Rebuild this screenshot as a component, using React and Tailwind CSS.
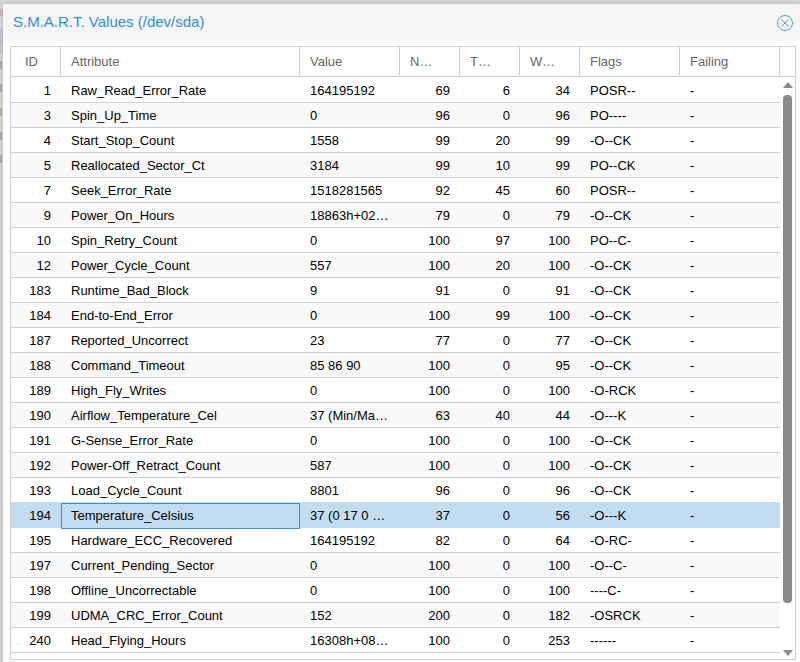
const rows = [
  ['1', 'Raw_Read_Error_Rate', '164195192', '69', '6', '34', 'POSR--'],
  ['3', 'Spin_Up_Time', '0', '96', '0', '96', 'PO----'],
  ['4', 'Start_Stop_Count', '1558', '99', '20', '99', '-O--CK'],
  ['5', 'Reallocated_Sector_Ct', '3184', '99', '10', '99', 'PO--CK'],
  ['7', 'Seek_Error_Rate', '1518281565', '92', '45', '60', 'POSR--'],
  ['9', 'Power_On_Hours', '18863h+02m+32.579s', '79', '0', '79', '-O--CK'],
  ['10', 'Spin_Retry_Count', '0', '100', '97', '100', 'PO--C-'],
  ['12', 'Power_Cycle_Count', '557', '100', '20', '100', '-O--CK'],
  ['183', 'Runtime_Bad_Block', '9', '91', '0', '91', '-O--CK'],
  ['184', 'End-to-End_Error', '0', '100', '99', '100', '-O--CK'],
  ['187', 'Reported_Uncorrect', '23', '77', '0', '77', '-O--CK'],
  ['188', 'Command_Timeout', '85 86 90', '100', '0', '95', '-O--CK'],
  ['189', 'High_Fly_Writes', '0', '100', '0', '100', '-O-RCK'],
  ['190', 'Airflow_Temperature_Cel', '37 (Min/Max 30/44)', '63', '40', '44', '-O---K'],
  ['191', 'G-Sense_Error_Rate', '0', '100', '0', '100', '-O--CK'],
  ['192', 'Power-Off_Retract_Count', '587', '100', '0', '100', '-O--CK'],
  ['193', 'Load_Cycle_Count', '8801', '96', '0', '96', '-O--CK'],
  ['194', 'Temperature_Celsius', '37 (0 17 0 0 0)', '37', '0', '56', '-O---K'],
  ['195', 'Hardware_ECC_Recovered', '164195192', '82', '0', '64', '-O-RC-'],
  ['197', 'Current_Pending_Sector', '0', '100', '0', '100', '-O--C-'],
  ['198', 'Offline_Uncorrectable', '0', '100', '0', '100', '----C-'],
  ['199', 'UDMA_CRC_Error_Count', '152', '200', '0', '182', '-OSRCK'],
  ['240', 'Head_Flying_Hours', '16308h+08m+14.120s', '100', '0', '253', '------'],
]

const columns = 'grid grid-cols-[50px_239px_100px_60px_60px_60px_100px_100px_1fr]'

const HeaderCell = ({ label, className = 'pl-[10px] pr-[10px]' }) => (
  <div className={`flex items-center border-r border-[#cfcfcf] ${className}`}>
    <span className="truncate">{label}</span>
  </div>
)

const Row = ({ row, index }) => {
  const [id, attribute, value, normalized, threshold, worst, flags] = row
  const selected = id === '194'
  const bg = selected
    ? 'bg-[#c2ddf2] border-[#c2ddf2] shadow-[0_-1px_0_#c2ddf2]'
    : index % 2
      ? 'bg-[#f9f9f9] border-[#cfcfcf]'
      : 'bg-white border-[#cfcfcf]'

  return (
    <div className={`${columns} h-[25px] border-b leading-[26px] ${bg}`}>
      <div className="px-[10px] text-right">{id}</div>
      <div
        className={`truncate border px-[9px] leading-[24px] ${selected ? 'border-[#3892d4]' : 'border-transparent'}`}
      >
        {attribute}
      </div>
      <div className="truncate px-[10px]">{value}</div>
      <div className="px-[10px] text-right">{normalized}</div>
      <div className="px-[10px] text-right">{threshold}</div>
      <div className="px-[10px] text-right">{worst}</div>
      <div className="px-[10px]">{flags}</div>
      <div className="px-[10px]">-</div>
    </div>
  )
}

// what shows of the page behind the window at the left edge
const BackdropEdge = () => (
  <div className="flex w-[3px] shrink-0 flex-col items-start pt-[9px]">
    <div className="h-[7px] w-[3px] bg-[#c8b8b4]" />
    <div className="mt-[12px] h-[25px] w-[3px] bg-[#bfc6d2]" />
    <div className="mt-[8px] h-[8px] w-[2px] bg-[#a9a9a9]" />
    <div className="mt-[15px] h-[8px] w-[2px] bg-[#a9a9a9]" />
    <div className="mt-[16px] h-[8px] w-[2px] bg-[#c9b092]" />
    <div className="mt-[16px] h-[8px] w-[2px] bg-[#a9a9a9]" />
    <div className="mt-[15px] h-[8px] w-[2px] bg-[#a9a9a9]" />
  </div>
)

const App = () => {
  return (
    <div className="flex h-[662px] w-[800px] overflow-hidden bg-[#d6d6d6] font-['Liberation_Sans',Arial,sans-serif]">
      <BackdropEdge />
      <div className="mt-[4px] h-[670px] w-[797px] bg-white shadow-[0_0_4px_rgba(0,0,0,0.15)]">
        <div className="flex h-[37px] items-center justify-between bg-[#f5f5f5] pl-[10px] pr-[7px]">
          <span className="text-[15px] text-[#2f8fd5]">S.M.A.R.T. Values (/dev/sda)</span>
          <svg width="16" height="16" viewBox="0 0 16 16" fill="none" stroke="#4d9fd9" strokeWidth="1">
            <circle cx="8" cy="8" r="7.5" />
            <path d="M4.5 4.5l7 7M11.5 4.5l-7 7" />
          </svg>
        </div>
        <div className="px-[7px] pt-[5px]">
          <div className="h-[614px] w-[786px] border border-[#cfcfcf] text-[13px] text-black">
            <div className={`${columns} h-[30px] border-b border-[#cfcfcf] text-[#666]`}>
              <HeaderCell label="ID" className="pl-[14px] pr-[10px]" />
              <HeaderCell label="Attribute" />
              <HeaderCell label="Value" />
              <HeaderCell label="Normalized" className="pl-[10px] pr-[24px]" />
              <HeaderCell label="Threshold" className="pl-[10px] pr-[24px]" />
              <HeaderCell label="Worst" className="pl-[10px] pr-[24px]" />
              <HeaderCell label="Flags" />
              <HeaderCell label="Failing" />
              <div />
            </div>
            <div className="relative h-[582px] overflow-hidden pt-[1px]">
              {rows.map((row, i) => (
                <Row key={row[0]} row={row} index={i} />
              ))}
              <div className="absolute top-0 right-0 bottom-0 flex w-[15px] flex-col items-center bg-white">
                <div className="mt-[5px] h-0 w-0 border-x-[5px] border-b-[6px] border-x-transparent border-b-[#8a8a8a]" />
                <div className="mt-[7px] h-[508px] w-[9px] rounded-[4px] bg-[#8a8a8a]" />
                <div className="mt-auto mb-[3px] h-0 w-0 border-x-[5px] border-t-[6px] border-x-transparent border-t-[#8a8a8a]" />
              </div>
            </div>
          </div>
        </div>
      </div>
    </div>
  )
}
export default App
